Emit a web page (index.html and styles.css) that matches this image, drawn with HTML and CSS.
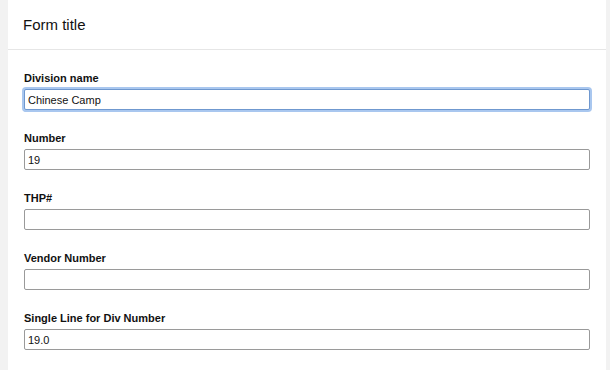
FILE: index.html
```html
<!DOCTYPE html>
<html lang="en">
<head>
  <meta charset="UTF-8" />
  <title>Form title</title>
  <link rel="stylesheet" href="styles.css">
</head>
<body>
  <div class="card">
    <div class="card-header">Form title</div>
    <form class="card-body">
      <div class="field">
        <label>Division name</label>
        <input type="text" class="focused" value="Chinese Camp">
      </div>
      <div class="field">
        <label>Number</label>
        <input type="text" value="19">
      </div>
      <div class="field">
        <label>THP#</label>
        <input type="text" value="">
      </div>
      <div class="field">
        <label>Vendor Number</label>
        <input type="text" value="">
      </div>
      <div class="field">
        <label>Single Line for Div Number</label>
        <input type="text" value="19.0">
      </div>
    </form>
  </div>
</body>
</html>
```

FILE: styles.css
```css
* {
  box-sizing: border-box;
}

body {
  margin: 0;
  background-color: #f2f2f2;
  font-family: "Liberation Sans", Arial, sans-serif;
  color: #111;
}

.card {
  margin: 0 4px 0 8px;
  background-color: #fff;
  min-height: 370px;
}

.card-header {
  height: 50px;
  padding: 16px 15px 0;
  font-size: 15px;
  line-height: 18px;
  border-bottom: 1px solid #e6e6e6;
}

.card-body {
  padding: 21px 16px 0;
}

.field {
  margin-bottom: 21px;
}

.field label {
  display: block;
  font-size: 11px;
  font-weight: bold;
  line-height: 14px;
  margin-bottom: 4px;
}

.field input {
  display: block;
  width: 100%;
  height: 21px;
  padding: 0 3px;
  border: 1px solid #9a9a9a;
  border-radius: 2px;
  font-family: inherit;
  font-size: 11px;
  color: #111;
  background: #fff;
  outline: none;
}

.field input.focused {
  border-color: #6f98cf;
  box-shadow: 0 0 0 2px #a9c7ef;
}
```
